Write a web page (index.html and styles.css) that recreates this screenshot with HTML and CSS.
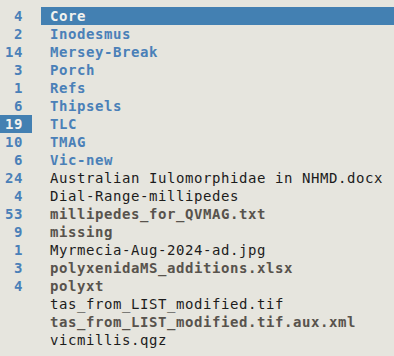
FILE: index.html
```html
<!DOCTYPE html>
<html lang="en">
<head>
    <meta charset="UTF-8">
    <title>Directory listing</title>
    <link rel="stylesheet" href="styles.css">
</head>
<body>
    <div class="listing">
        <div class="row"><span class="count">4</span><span class="name dir current">Core</span></div>
        <div class="row"><span class="count">2</span><span class="name dir">Inodesmus</span></div>
        <div class="row"><span class="count">14</span><span class="name dir">Mersey-Break</span></div>
        <div class="row"><span class="count">3</span><span class="name dir">Porch</span></div>
        <div class="row"><span class="count">1</span><span class="name dir">Refs</span></div>
        <div class="row"><span class="count">6</span><span class="name dir">Thipsels</span></div>
        <div class="row"><span class="count marked">19</span><span class="name dir">TLC</span></div>
        <div class="row"><span class="count">10</span><span class="name dir">TMAG</span></div>
        <div class="row"><span class="count">6</span><span class="name dir">Vic-new</span></div>
        <div class="row"><span class="count">24</span><span class="name">Australian Iulomorphidae in NHMD.docx</span></div>
        <div class="row"><span class="count">4</span><span class="name">Dial-Range-millipedes</span></div>
        <div class="row"><span class="count">53</span><span class="name other">millipedes_for_QVMAG.txt</span></div>
        <div class="row"><span class="count">9</span><span class="name other">missing</span></div>
        <div class="row"><span class="count">1</span><span class="name">Myrmecia-Aug-2024-ad.jpg</span></div>
        <div class="row"><span class="count">3</span><span class="name other">polyxenidaMS_additions.xlsx</span></div>
        <div class="row"><span class="count">4</span><span class="name other">polyxt</span></div>
        <div class="row"><span class="count"></span><span class="name">tas_from_LIST_modified.tif</span></div>
        <div class="row"><span class="count"></span><span class="name other">tas_from_LIST_modified.tif.aux.xml</span></div>
        <div class="row"><span class="count"></span><span class="name">vicmillis.qgz</span></div>
    </div>
</body>
</html>
```

FILE: styles.css
```css
/* Terminal-ish file listing */
body {
    margin: 0;
    padding: 7px 0 0 0;
    background: #e6e5de;
    font-family: "DejaVu Sans Mono", monospace;
    font-size: 14px;
    letter-spacing: 0.57px;
    color: #1c1c1c;
}

.row {
    display: flex;
    height: 18px;
    line-height: 18px;
    white-space: pre;
}

.count {
    width: 23px;
    padding-right: 9px;
    text-align: right;
    font-weight: bold;
    color: #4a80b8;
}

.count.marked {
    background: #4380b2;
    color: #f2f2ee;
}

.name {
    flex: 1;
    margin-left: 9px;
    padding-left: 9px;
}

.dir {
    font-weight: bold;
    color: #4a80b8;
}

.other {
    font-weight: bold;
    color: #58534d;
}

.current {
    background: #4380b2;
    color: #f2f2ee;
}
```
